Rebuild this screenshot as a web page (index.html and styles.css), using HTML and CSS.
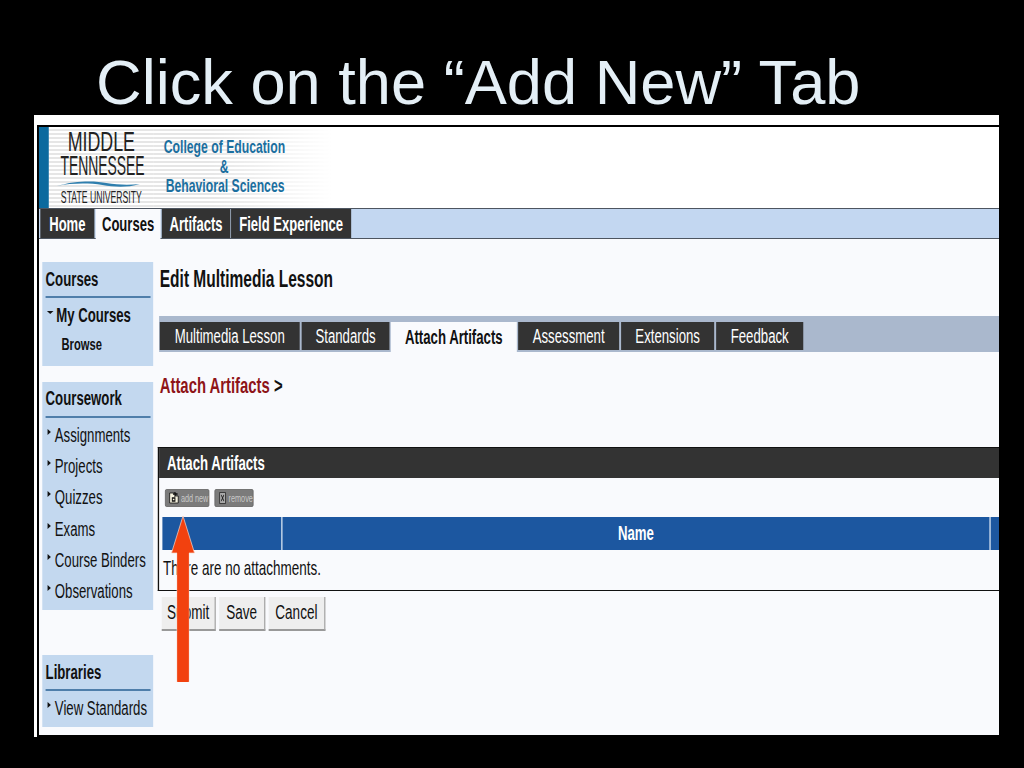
FILE: index.html
```html
<!DOCTYPE html>
<html lang="en">
  <head>
    <meta charset="UTF-8" />
    <title>Click on the Add New Tab</title>
    <link rel="stylesheet" href="styles.css">
  </head>
  <body>
    <h1 class="slide-title">Click on the “Add New” Tab</h1>

    <div class="shot">
      <div class="page">
        <header class="banner">
          <div class="logo-bar"></div>
          <div class="logo">
            <div class="logo-middle">MIDDLE</div>
            <div class="logo-tenn">TENNESSEE</div>
            <svg class="swoosh" viewBox="0 0 84 8" width="126" height="8" preserveAspectRatio="none">
              <path d="M0 6 C20 0 40 1 50 3 C62 5 74 5 84 4 C70 8 58 7 46 5 C32 3 16 3 0 6 Z" fill="#2f7fae" />
            </svg>
            <div class="logo-state">STATE UNIVERSITY</div>
          </div>
          <div class="college">
            <div>College of Education</div>
            <div class="amp">&amp;</div>
            <div class="college-last">Behavioral Sciences</div>
          </div>
        </header>

        <nav class="main-nav">
          <a class="home">Home</a>
          <a class="courses active">Courses</a>
          <a class="artifacts">Artifacts</a>
          <a class="field">Field Experience</a>
        </nav>

        <div class="body-row">
          <aside class="sidebar">
            <div class="side-box box-courses">
              <div class="side-head">Courses</div>
              <div class="side-item open"><span class="tri-down"></span>My Courses</div>
              <div class="side-sub">Browse</div>
            </div>
            <div class="side-box box-work">
              <div class="side-head">Coursework</div>
              <div class="side-item"><span class="tri"></span>Assignments</div>
              <div class="side-item"><span class="tri"></span>Projects</div>
              <div class="side-item"><span class="tri"></span>Quizzes</div>
              <div class="side-item"><span class="tri"></span>Exams</div>
              <div class="side-item"><span class="tri"></span>Course Binders</div>
              <div class="side-item"><span class="tri"></span>Observations</div>
            </div>
            <div class="side-box box-lib">
              <div class="side-head">Libraries</div>
              <div class="side-item"><span class="tri"></span>View Standards</div>
            </div>
          </aside>

          <main class="content">
            <h2 class="page-title">Edit Multimedia Lesson</h2>

            <div class="tabs">
              <a class="t1">Multimedia Lesson</a>
              <a class="t2">Standards</a>
              <a class="t3 active">Attach Artifacts</a>
              <a class="t4">Assessment</a>
              <a class="t5">Extensions</a>
              <a class="t6">Feedback</a>
            </div>

            <div class="crumb"><span>Attach Artifacts</span> &gt;</div>

            <section class="panel">
              <div class="panel-head">Attach Artifacts</div>
              <div class="toolbar">
                <button class="tool add">
                  <svg viewBox="0 0 15 12" width="15" height="12" preserveAspectRatio="none">
                    <path d="M1 1h9v3h4v7H1z" fill="#f6f3df" stroke="#111" />
                    <path d="M9 0v5M6 2h7M5 6h4v3H5z" stroke="#111" fill="none" stroke-width="1.5" />
                  </svg>
                  <span>add new</span>
                </button>
                <button class="tool remove">
                  <svg viewBox="0 0 15 12" width="15" height="12" preserveAspectRatio="none">
                    <path d="M2 .5h11v11H2z" fill="#aaa" stroke="#222" />
                    <path d="M5 3l5 6M10 3l-5 6" stroke="#222" stroke-width="1.2" />
                  </svg>
                  <span>remove</span>
                </button>
              </div>
              <div class="table-head">
                <div class="col-check"></div>
                <div class="col-name">Name</div>
                <div class="col-end"></div>
              </div>
              <div class="empty">There are no attachments.</div>
            </section>

            <div class="actions">
              <button class="submit">Submit</button>
              <button class="save">Save</button>
              <button class="cancel">Cancel</button>
            </div>
          </main>
        </div>
      </div>
    </div>

    <svg class="arrow" viewBox="0 0 24 167" width="24" height="167">
      <path d="M12 1 L23.5 38 L18 38 L18 167 L6 167 L6 38 L.5 38 Z" fill="#f2410f" stroke="#f7d9cc" stroke-width=".7" />
      <path d="M6.4 37 H17.6 V167 H6.4 Z" fill="#f2410f" />
    </svg>
  </body>
</html>
```

FILE: styles.css
```css
* {
  box-sizing: border-box;
}

body {
  margin: 0;
  height: 768px;
  overflow: hidden;
  background-color: #000;
  font-family: "Liberation Sans", Arial, sans-serif;
  color: #111;
  position: relative;
}

.slide-title {
  margin: 0;
  height: 115px;
  padding: 46px 0 0 96px;
  font-size: 63.2px;
  font-weight: normal;
  line-height: 72px;
  white-space: nowrap;
  color: #e4eff6;
}

.shot {
  width: 965px;
  height: 622px;
  margin-left: 34px;
  padding: 10px 0 0 3px;
  background-color: #fff;
  overflow: hidden;
}

/* the page in the picture is squeezed sideways, so it is laid out wide and scaled */
.page {
  width: 1458px;
  height: 612px;
  transform: scaleX(0.66);
  transform-origin: left top;
  border-top: 2px solid #000;
  border-left: 3px solid #000;
  border-bottom: 2px solid #000;
  background-color: #f9fafd;
}

/* banner */
.banner {
  height: 81px;
  display: flex;
  background-color: #fff;
}

.logo-bar {
  width: 15px;
  background-color: #0b6a9e;
}

.logo {
  width: 159px;
  padding-top: 3px;
  text-align: center;
  color: #222;
  white-space: nowrap;
  background: repeating-linear-gradient(#fff 0 2px, #e6e6e6 2px 4px);
}

.logo-middle {
  font-size: 27px;
  line-height: 24px;
}

.logo-tenn {
  font-size: 27px;
  line-height: 24px;
  transform: scaleX(0.78);
}

.swoosh {
  display: block;
  margin: 2px 0 0 12px;
}

.logo-state {
  font-size: 16px;
  line-height: 20px;
  transform: scaleX(0.82);
}

.college {
  width: 267px;
  padding: 10px 0 0 15px;
  font-size: 18.5px;
  line-height: 20px;
  font-weight: bold;
  white-space: nowrap;
  color: #1b6f9f;
  background: linear-gradient(to right, rgba(255, 255, 255, 0) 30%, #fff),
    repeating-linear-gradient(#fff 0 2px, #e6e6e6 2px 4px);
}

.college .amp {
  padding-left: 85px;
  line-height: 19px;
}

.college-last {
  padding-left: 3px;
}

/* top nav */
.main-nav {
  height: 31px;
  display: flex;
  align-items: stretch;
  background-color: #c3d7f1;
  border-top: 1px solid #4d5560;
  border-bottom: 1px solid #4d5560;
}

.main-nav a {
  display: flex;
  align-items: center;
  justify-content: center;
  margin-right: 2px;
  padding-top: 1px;
  background-color: #333;
  color: #fff;
  font-size: 19.8px;
  font-weight: bold;
  white-space: nowrap;
}

.main-nav a.home { width: 82px; margin-left: 2px; }
.main-nav a.courses { width: 98px; }
.main-nav a.artifacts { width: 104px; margin-right: 1px; }
.main-nav a.field { width: 182px; margin-right: 0; }

.main-nav a.active {
  background-color: #f9fafd;
  color: #111;
  margin-bottom: -1px;
}

/* body */
.body-row {
  display: flex;
}

.sidebar {
  width: 183px;
  padding: 23px 0 0 5px;
  flex-shrink: 0;
}

.side-box {
  width: 168px;
  background-color: #c3d8ef;
  padding: 0 4px 0 5px;
}

.box-courses { height: 104px; margin-bottom: 16px; }
.box-work { height: 228px; margin-bottom: 45px; }
.box-lib { height: 72px; }

.side-head {
  height: 36px;
  margin-bottom: 2px;
  border-bottom: 2px solid #4f7eaa;
  font-size: 20px;
  line-height: 34px;
  font-weight: bold;
  white-space: nowrap;
}

.box-work .side-head {
  line-height: 33px;
}

.side-item {
  height: 31.2px;
  display: flex;
  align-items: center;
  font-size: 20px;
  white-space: nowrap;
}

.side-item.open {
  font-weight: bold;
  height: 31px;
}

.side-sub {
  padding-left: 24px;
  font-size: 17px;
  font-weight: bold;
  line-height: 28px;
}

.tri {
  width: 0;
  height: 0;
  margin: -7px 6px 0 3px;
  border-top: 3px solid transparent;
  border-bottom: 3px solid transparent;
  border-left: 5px solid #111;
}

.tri-down {
  width: 0;
  height: 0;
  margin: -7px 4px 0 2px;
  border-left: 5px solid transparent;
  border-right: 5px solid transparent;
  border-top: 3px solid #111;
}

.content {
  flex: 1;
  min-width: 0;
}

.page-title {
  margin: 0;
  height: 77px;
  padding: 26px 0 0 0;
  font-size: 23.5px;
  line-height: 28px;
  font-weight: bold;
}

/* lesson tabs */
.tabs {
  height: 36px;
  display: flex;
  margin-left: -1px;
  padding: 6px 0 2px 1px;
  background-color: #aab8cd;
}

.tabs a {
  display: flex;
  align-items: center;
  justify-content: center;
  background-color: #333;
  color: #fff;
  font-size: 20px;
  margin-right: 3px;
  white-space: nowrap;
}

.tabs .t1 { width: 212px; }
.tabs .t2 { width: 133px; margin-right: 2px; }
.tabs .t3 { width: 191px; margin-right: 2px; }
.tabs .t4 { width: 153px; }
.tabs .t5 { width: 141px; }
.tabs .t6 { width: 132px; }

.tabs a.active {
  background-color: #f9fafd;
  color: #111;
  font-weight: bold;
  margin-bottom: -2px;
}

.crumb {
  height: 95px;
  padding: 20px 0 0 0;
  font-size: 22.5px;
  line-height: 28px;
  font-weight: bold;
}

.crumb span {
  color: #8e1418;
}

/* attach panel */
.panel {
  height: 144px;
  margin-left: -3px;
  border-top: 1px solid #111;
  border-left: 2px solid #111;
  border-bottom: 1px solid #111;
}

.panel-head {
  height: 30px;
  padding-left: 12px;
  background-color: #333;
  color: #fff;
  font-size: 20px;
  line-height: 30px;
  font-weight: bold;
}

.toolbar {
  height: 39px;
  display: flex;
  gap: 8px;
  padding: 11px 0 0 9px;
}

.tool {
  height: 18px;
  padding: 0 0 0 5px;
  display: flex;
  align-items: center;
  gap: 3px;
  border: 1px solid #666;
  border-radius: 2px;
  background-color: #7b7b7b;
  color: #c9c9c9;
  font-family: inherit;
  font-size: 11px;
  white-space: nowrap;
}

.tool.add { width: 67px; }
.tool.remove { width: 59px; }

.table-head {
  height: 33px;
  margin-left: 5px;
  display: flex;
  background-color: #1c57a0;
  color: #fff;
  font-size: 20px;
  line-height: 33px;
  font-weight: bold;
  text-align: center;
}

.col-check {
  width: 182px;
  border-right: 2px solid #d5e3f2;
}

.col-name {
  width: 1073px;
  border-right: 2px solid #d5e3f2;
}

.col-end {
  flex: 1;
}

.empty {
  padding: 6px 0 0 6px;
  font-size: 20.4px;
  line-height: 24px;
}

.actions {
  display: flex;
  gap: 5px;
  padding: 6px 0 0 3px;
}

.actions button {
  height: 34px;
  padding: 0 0 2px;
  border: none;
  border-bottom: 2px solid #999;
  border-right: 2px solid #aaa;
  background-color: #eeeeee;
  color: #111;
  font-family: inherit;
  font-size: 20.5px;
}

.actions .submit { width: 82px; }
.actions .save { width: 70px; }
.actions .cancel { width: 86px; }

/* arrow sits over the page */
.arrow {
  position: absolute;
  left: 171px;
  top: 515px;
}
```
